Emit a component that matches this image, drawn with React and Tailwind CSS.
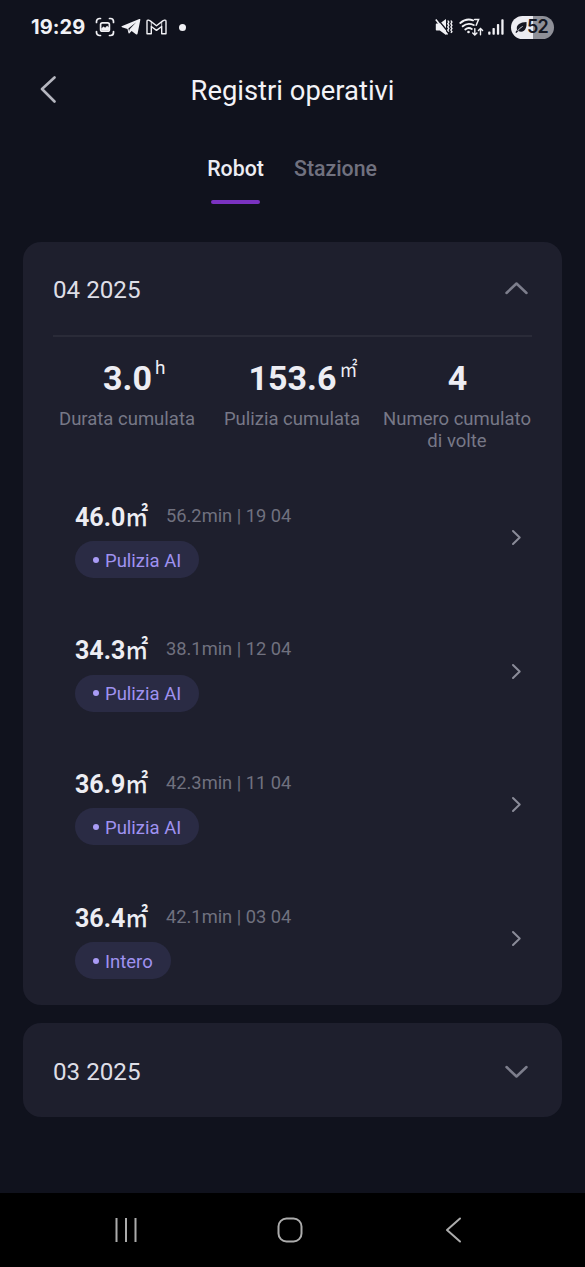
import React from "react";

const FONT = "font-['Roboto','Noto_Sans_CJK_SC',sans-serif]";

const records = [
  { area: "46.0", info: "56.2min | 19 04", mode: "Pulizia AI" },
  { area: "34.3", info: "38.1min | 12 04", mode: "Pulizia AI" },
  { area: "36.9", info: "42.3min | 11 04", mode: "Pulizia AI" },
  { area: "36.4", info: "42.1min | 03 04", mode: "Intero" },
];

function Chevron({ d, className, width, height, strokeWidth = 2.5 }) {
  return (
    <svg
      className={className}
      width={width}
      height={height}
      viewBox={`0 0 ${width} ${height}`}
      fill="none"
      stroke="currentColor"
      strokeWidth={strokeWidth}
      strokeLinecap="round"
      strokeLinejoin="round"
    >
      <path d={d} />
    </svg>
  );
}

function StatusBar() {
  return (
    <div className="flex h-[54px] items-center justify-between pl-[31px] pr-[31px] text-[#f1f1f5]">
      <div className="flex items-center">
        <span className="w-[64px] whitespace-nowrap font-['Inter',sans-serif] text-[20px] leading-none font-bold tracking-[0.1px]">
          19:29
        </span>
        <svg width="20" height="20" viewBox="0 0 20 20" fill="none" stroke="currentColor" strokeWidth="1.7" strokeLinecap="round">
          <path d="M1.500 5.500V4.500a3 3 0 0 1 3-3h1M14.500 1.500h1a3 3 0 0 1 3 3v1M18.500 14.500v1a3 3 0 0 1-3 3h-1M5.500 18.500h-1a3 3 0 0 1-3-3v-1" />
          <rect x="5.600" y="5.800" width="8.800" height="8.400" rx="1.800" />
          <path d="M6.200 11.500l2.400-2 1.500 1.200 2-1.900 1.900 1.700v2.100q0 1-1 1H7.200q-1 0-1-1z" fill="currentColor" stroke="none" />
        </svg>
        <svg className="ml-[6px]" width="20" height="18" viewBox="0 0 20 18" fill="currentColor">
          <path d="M18.300 1Q19.600.5 19.300 2L16.600 15.600Q16.300 17.100 14.900 16.200L10.600 13.100 8.500 15.300Q7.600 16 7.400 14.800L6.500 11 1 9.200Q-.2 8.500 1.200 7.900ZM15.200 4.200L7.400 10.600 8.100 13.400 8.600 11.300Z" />
        </svg>
        <svg className="ml-[5px]" width="21" height="16" viewBox="0 0 21 16" fill="none" stroke="currentColor" strokeWidth="1.400" strokeLinejoin="round">
          <path d="M1 14.800V2.500Q1 .9 2.500 1.100L4.200 1.900 10.500 6.700 16.800 1.900 18.500 1.100Q20 .9 20 2.500V14.800H15.700V7.500L10.500 11.400 5.300 7.500V14.800Z" />
          <path d="M5.300 7.500V2.800M15.700 7.500V2.800" strokeWidth=".8" />
        </svg>
        <span className="ml-[12px] size-[7px] rounded-full bg-[#f1f1f5]" />
      </div>
      <div className="flex items-center">
        <svg className="ml-px" width="18" height="18" viewBox="0 0 18 18" fill="none" stroke="currentColor">
          <path d="M1.500 5.500h3.300L11 1V17L4.800 12.500H1.500Q.8 12.500 .8 11.700V6.300Q.8 5.500 1.500 5.500z" fill="currentColor" stroke="none" />
          <path d="M2.200.6L13 13.800" stroke="#10121d" strokeWidth="1.400" />
          <path d="M.8 1.400L12.500 16.500" strokeWidth="1.600" />
          <path d="M12.800 2.500l1 1.600-1 1.600 1 1.600-1 1.600 1 1.600-1 1.600 1 1.600M15.900 2.500l1 1.600-1 1.600 1 1.600-1 1.600 1 1.600-1 1.600 1 1.600-1 1.200" strokeWidth="1.400" />
        </svg>
        <svg className="ml-[6px]" width="25" height="20" viewBox="0 0 25 20" fill="none" stroke="currentColor" strokeWidth="1.900" strokeLinecap="round">
          <path d="M1.300 6Q7.300.8 14 3.300M3.700 9.300Q8.600 5.200 14.700 8M6.300 12.400Q9.500 9.900 12.800 12" />
          <circle cx="9.500" cy="15" r="1.300" fill="currentColor" stroke="none" />
          <path d="M15.600 2.500H19.600L17.200 8.200" strokeWidth="1.500" />
          <path d="M15.800 11.600V17.800M13.700 15.900L15.800 18 17.900 15.900M21.500 17.800V11.600M19.400 13.500L21.500 11.400 23.600 13.500" strokeWidth="1.400" />
        </svg>
        <svg className="ml-[4px]" width="16" height="16" viewBox="0 0 16 16" fill="currentColor">
          <rect x=".2" y="12.600" width="2.300" height="3.200" rx=".8" />
          <rect x="4.500" y="9" width="2.300" height="6.800" rx=".8" />
          <rect x="8.900" y="4.900" width="2.300" height="10.900" rx=".8" />
          <rect x="13.300" y=".2" width="2.300" height="15.600" rx=".8" />
        </svg>
        <div className="ml-[7px] flex h-[23px] w-[43px] items-center rounded-full bg-linear-to-r from-[#ececf1] from-52% to-[#8f9098] to-52% pl-[4px] text-[#151722]">
          <svg width="12" height="13" viewBox="0 0 12 13" fill="currentColor">
            <path d="M11.500 1Q12 7.500 9 9.700 6.400 11.500 3.400 10L1.400 12 .4 11.200 2 8.900Q1 5.300 4 3.100 6.600 1.200 11.500 1Z" />
            <path d="M2.500 10Q4.500 7 7.700 5.400" stroke="#ececf1" strokeWidth=".8" fill="none" />
          </svg>
          <span className="font-['Inter',sans-serif] text-[18px] leading-none font-semibold tracking-[-0.8px]">52</span>
        </div>
      </div>
    </div>
  );
}

function Stat({ value, unit, children }) {
  return (
    <div className="flex w-[165px] flex-col items-center">
      <div className="relative text-[34px] leading-[42px] font-bold text-[#ededf3]">
        {value}
        {unit}
      </div>
      <div className="mt-[10px] mr-[1px] text-center text-[18.5px] leading-[21.500px] whitespace-nowrap text-[#777887]">{children}</div>
    </div>
  );
}

function RecordRow({ area, info, mode }) {
  return (
    <div className="flex h-[133.700px] items-start justify-between pr-[40px] pl-[52px]">
      <div>
        <div className="flex h-[30px] items-center whitespace-nowrap">
          <span className="w-[91px] pt-[5px] text-[25px] leading-[30px] font-bold text-[#ededf3]">
            {area}
            <span className="inline-block origin-bottom translate-y-[1px] scale-y-[1.15] text-[23px] leading-[22px] font-medium">㎡</span>
          </span>
          <span className="pt-[1px] text-[18.300px] leading-[30px] text-[#70717f]">{info}</span>
        </div>
        <div className="mt-[11px] inline-flex h-[37px] items-center rounded-full bg-[#2a2b44] pr-[18px] pl-[18px] text-[18.5px] text-[#9f92f0]">
          <span className="mr-[6px] size-[6px] rounded-full bg-[#a99bf5]" />
          <span className="pt-[4px]">{mode}</span>
        </div>
      </div>
      <Chevron className="mt-[29px] text-[#8b8c99]" width={11} height={17} strokeWidth={2} d="M2 2L8.700 8.500L2 15" />
    </div>
  );
}

export default function App() {
  return (
    <div className={`flex h-[1267px] w-[585px] flex-col overflow-hidden bg-[#10121d] ${FONT}`}>
      <StatusBar />
      <header className="grid h-[72px] grid-cols-[100px_1fr_100px] items-center">
        <Chevron className="ml-[39px] text-[#b5b6bf]" width={18} height={28} strokeWidth={2.6} d="M15.500 1.500L3 13L15.500 25.500" />
        <h1 className="pt-[1px] text-center text-[27.400px] leading-[36px] whitespace-nowrap text-[#f3f3f7]">Registri operativi</h1>
      </header>
      <nav className="flex h-[116px] items-start pt-[28px] pl-[207px] text-[21.300px] leading-[30px] font-medium">
        <div className="flex w-[57px] flex-col items-center text-[#ededf3]">
          Robot
          <span className="mt-[16px] h-[4px] w-[49px] rounded-full bg-[#7a32c0]" />
        </div>
        <div className="ml-[30px] text-[#70717f]">Stazione</div>
      </nav>
      <main className="flex flex-1 flex-col gap-[18px] pr-[23px] pl-[23px]">
        <section className="h-[763px] rounded-[18px] bg-[#1e1f2d]">
          <div className="mx-[30px] flex h-[95px] items-center justify-between border-b-2 border-[#2a2b38] pr-[4px]">
            <h2 className="pt-[4px] text-[24.200px] text-[#dedee6]">04 2025</h2>
            <Chevron className="mb-[2px] text-[#7d7e8c]" width={24} height={16} d="M2.500 13L12.500 3.500L22.500 13" />
          </div>
          <div className="flex h-[163px] justify-center pt-[20px]">
            <Stat value="3.0" unit={<span className="absolute top-[-6px] left-full ml-[3px] text-[19px] leading-[34px] font-normal">h</span>}>
              Durata cumulata
            </Stat>
            <Stat value="153.6" unit={<span className="absolute top-[-4px] left-full ml-[3px] scale-y-[1.15] text-[18px] leading-[34px] font-normal">㎡</span>}>
              Pulizia cumulata
            </Stat>
            <Stat value="4">
              Numero cumulato
              <br />
              di volte
            </Stat>
          </div>
          {records.map((r) => (
            <RecordRow key={r.info} {...r} />
          ))}
        </section>
        <section className="flex h-[94px] items-center justify-between rounded-[18px] bg-[#1e1f2d] pr-[34px] pl-[30px]">
          <h2 className="pt-[4px] text-[24.200px] text-[#dedee6]">03 2025</h2>
          <Chevron className="mt-[3px] text-[#7d7e8c]" width={24} height={16} d="M2.500 3L12.500 12.500L22.500 3" />
        </section>
      </main>
      <footer className="flex h-[74px] items-center bg-black pl-[114px] text-[#acacac]">
        <svg width="24" height="26" viewBox="0 0 24 26" fill="none" stroke="currentColor" strokeWidth="2">
          <path d="M2.500 1V25M12 1V25M21.500 1V25" />
        </svg>
        <svg className="ml-[139px]" width="26" height="26" viewBox="0 0 26 26" fill="none" stroke="currentColor" strokeWidth="2">
          <rect x="1.500" y="1.500" width="23" height="23" rx="8" />
        </svg>
        <Chevron className="ml-[142px]" width={17} height={26} strokeWidth={2} d="M15 1.500L2 13L15 24.500" />
      </footer>
    </div>
  );
}
